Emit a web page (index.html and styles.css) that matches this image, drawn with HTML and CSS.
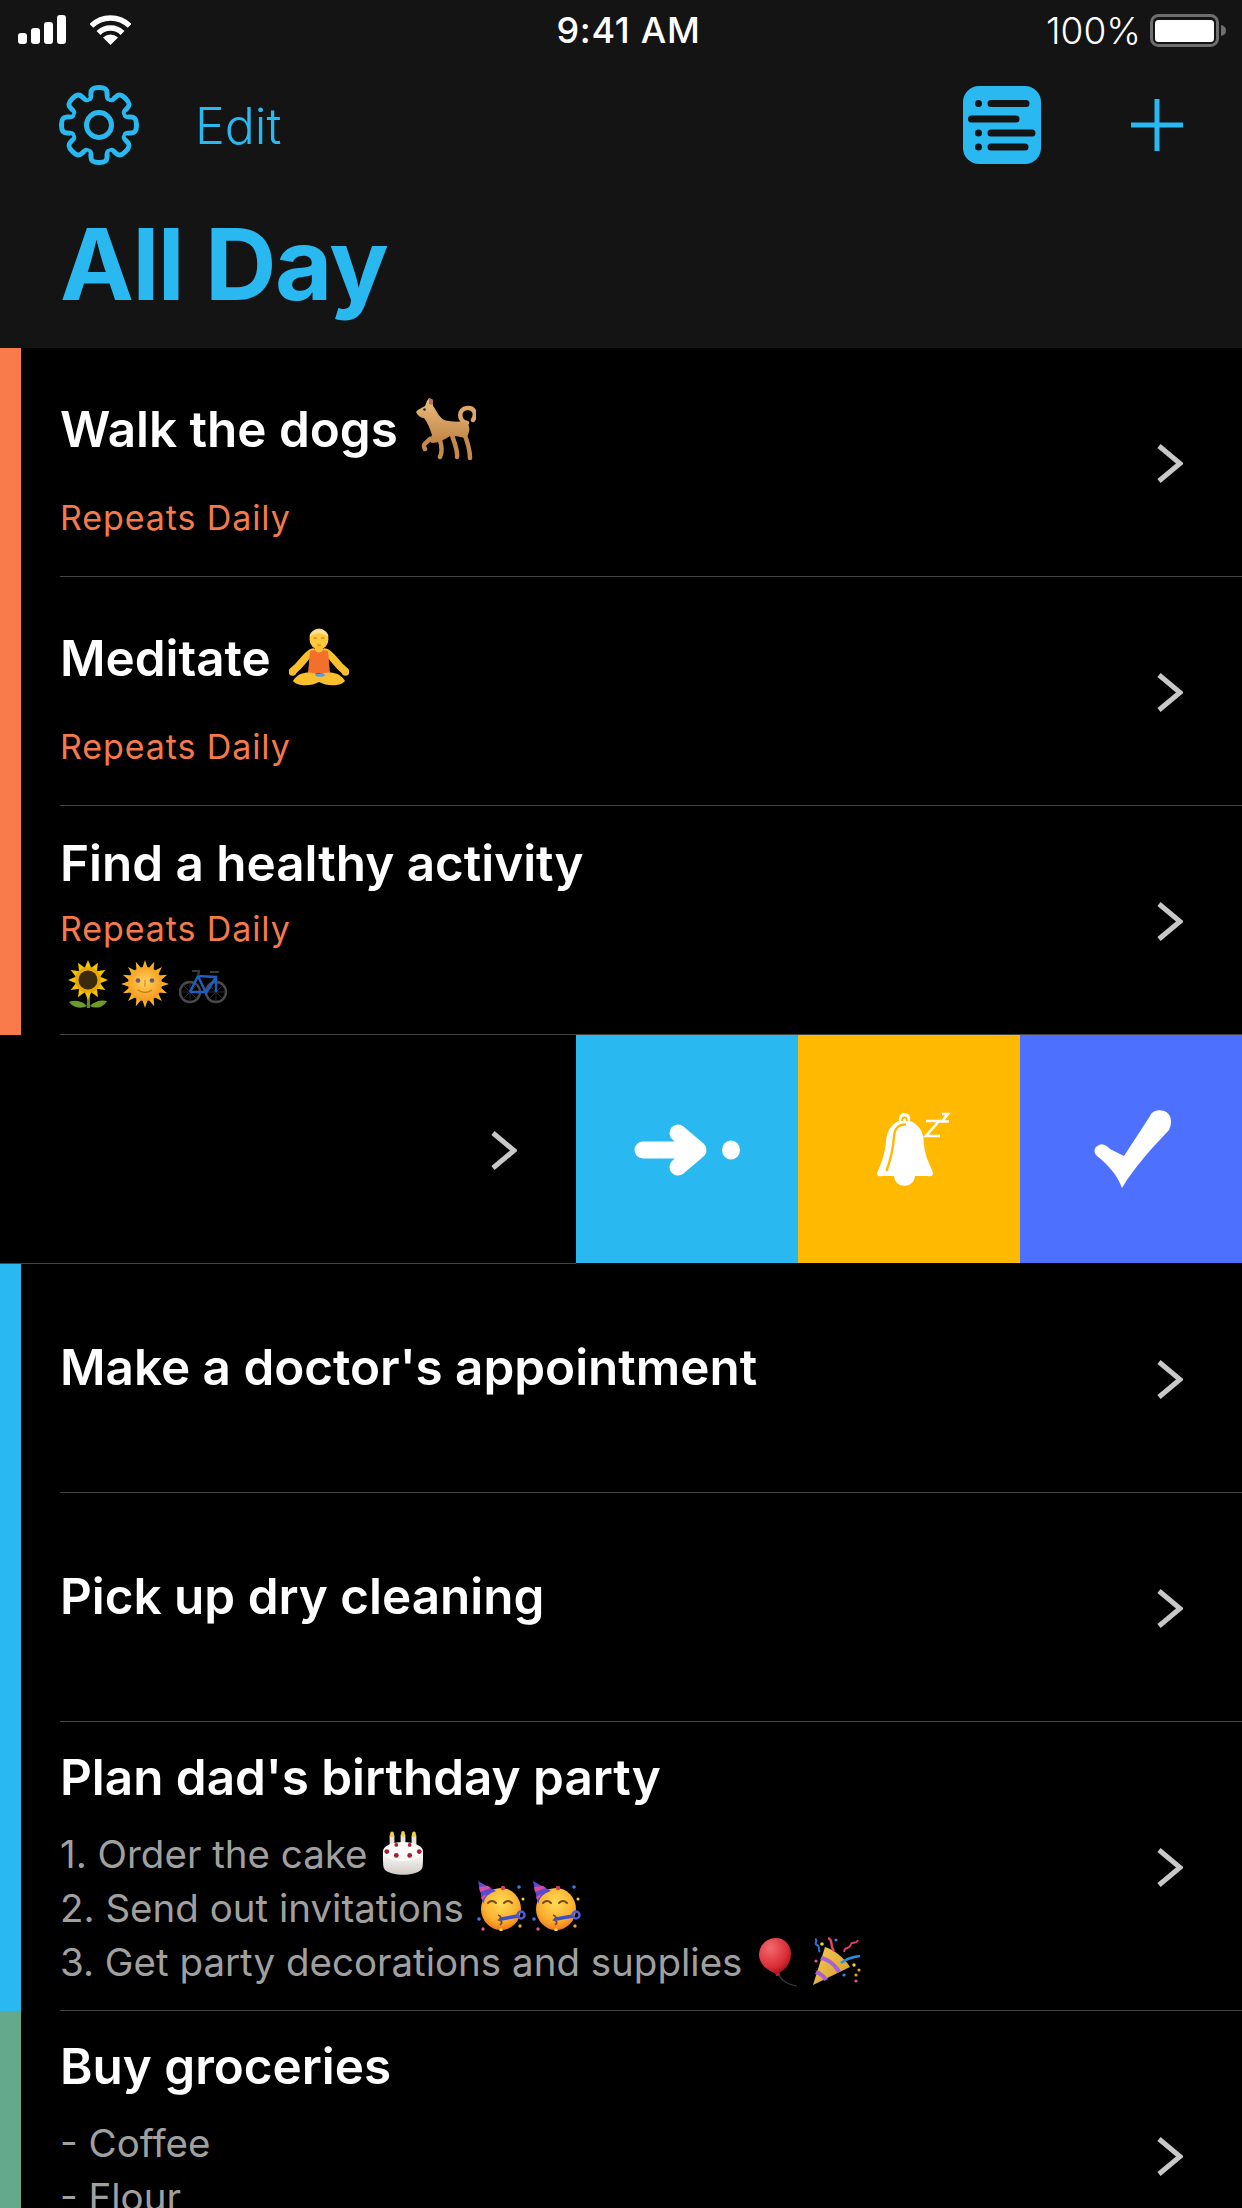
FILE: index.html
```html
<!DOCTYPE html>
<html lang="en">
<head>
<meta charset="utf-8">
<title>All Day</title>
<link rel="stylesheet" href="styles.css">
</head>
<body>
<svg class="defs" aria-hidden="true">
  <defs>
    <linearGradient id="gDog" x1="0" y1="0" x2="0" y2="1"><stop offset="0" stop-color="#EDBE80"/><stop offset="1" stop-color="#C08445"/></linearGradient>
    <radialGradient id="gSun" cx=".5" cy=".45" r=".55"><stop offset="0" stop-color="#FFD45A"/><stop offset="1" stop-color="#F59A1E"/></radialGradient>
    <radialGradient id="gFace" cx=".5" cy=".35" r=".65"><stop offset="0" stop-color="#FFDC55"/><stop offset=".7" stop-color="#FBAE2E"/><stop offset="1" stop-color="#EE7A1C"/></radialGradient>
    <radialGradient id="gBalloon" cx=".35" cy=".28" r=".75"><stop offset="0" stop-color="#F26A6E"/><stop offset=".7" stop-color="#DC2F37"/><stop offset="1" stop-color="#A8141F"/></radialGradient>
    <linearGradient id="gCone" x1="0" y1="0" x2="1" y2="1"><stop offset="0" stop-color="#F2CC55"/><stop offset="1" stop-color="#D99A2B"/></linearGradient>
    <linearGradient id="gCake" x1="0" y1="0" x2="0" y2="1"><stop offset="0" stop-color="#FFFFFF"/><stop offset="1" stop-color="#CFCBC6"/></linearGradient>
    <symbol id="partyFace" viewBox="0 0 50 50">
      <ellipse cx="25" cy="28" rx="20" ry="21" fill="url(#gFace)"/>
      <path d="M2 0 L20 10 Q9 13 7 23 Z" fill="#5B49D0"/>
      <path d="M3 6 L12 5 L15 7 L4 11 Z M5 16 L10 13 L9 16 L6 19 Z" fill="#D94C9E"/>
      <path d="M12 22 Q16 18 20 22 M28 22 Q32 18 36 22" fill="none" stroke="#7A4A1C" stroke-width="2" stroke-linecap="round"/>
      <path d="M22 34 Q27 36 23 39 Q28 41 24 44" fill="none" stroke="#7A4A1C" stroke-width="1.800"/>
      <path d="M25 38 L42 35" stroke="#3D4FC8" stroke-width="3.500" stroke-linecap="round"/>
      <circle cx="45" cy="34" r="3.500" fill="none" stroke="#4A5FD8" stroke-width="2.500"/>
      <circle cx="43" cy="6" r="1.800" fill="#3B7BE0"/><circle cx="27" cy="7" r="2.200" fill="#D63F5A"/>
      <circle cx="3" cy="38" r="1.800" fill="#3B7BE0"/><circle cx="7" cy="48" r="1.700" fill="#E0568A"/>
      <circle cx="25" cy="49" r="1.700" fill="#FFD42E"/><circle cx="44" cy="45" r="1.700" fill="#F0A030"/>
      <circle cx="47" cy="18" r="1.500" fill="#FFD42E"/>
    </symbol>
  </defs>
</svg>

<header class="top">
  <div class="status">
    <div class="status-left">
      <svg class="signal" viewBox="0 0 48 30"><rect x="0" y="18" width="9" height="11" rx="3" /><rect x="13" y="13" width="9" height="16" rx="3"/><rect x="26" y="7" width="9" height="22" rx="3"/><rect x="39" y="0" width="9" height="29" rx="3"/></svg>
      <svg class="wifi" viewBox="0 0 41 30"><path d="M1.400 10.900 A27 27 0 0 1 39.600 10.900 M8.500 18 A17 17 0 0 1 32.500 18" fill="none" stroke="#fff" stroke-width="5.500"/><path d="M20.500 30 L13 22.500 Q20.500 16.500 28 22.500 Z" fill="#fff"/></svg>
    </div>
    <div class="status-time">9:41 AM</div>
    <div class="status-right">
      <span class="pct">100%</span>
      <svg class="battery" viewBox="0 0 77 33"><rect x="1.500" y="1.500" width="66" height="30" rx="7" fill="none" stroke="#6E6E6E" stroke-width="3"/><rect x="5" y="6" width="59" height="22" rx="3.500" fill="#fff"/><path d="M71 11 Q76 12 76 16.500 Q76 21 71 22 Z" fill="#6E6E6E"/></svg>
    </div>
  </div>
  <nav class="nav">
    <svg class="gear" viewBox="-41 -41 82 82">
      <g fill="none" stroke="#29B9F0" stroke-width="5" stroke-linejoin="round">
        <g id="tooth"><path d="M-11 -26.500 C-8.500 -25.500 -8 -28 -8 -32 C-8 -36 -6 -37.500 0 -37.500 C6 -37.500 8 -36 8 -32 C8 -28 8.500 -25.500 11 -26.500"/></g>
        <use href="#tooth" transform="rotate(45)"/><use href="#tooth" transform="rotate(90)"/><use href="#tooth" transform="rotate(135)"/><use href="#tooth" transform="rotate(180)"/><use href="#tooth" transform="rotate(225)"/><use href="#tooth" transform="rotate(270)"/><use href="#tooth" transform="rotate(315)"/>
        <circle r="12.500"/>
      </g>
    </svg>
    <span class="edit">Edit</span>
    <div class="nav-right">
      <svg class="listicon" viewBox="0 0 78 78">
        <rect width="78" height="78" rx="16" fill="#29B9F0"/>
        <g fill="none" stroke="#141414" stroke-width="7" stroke-linecap="round">
          <path d="M15.500 17.500 V17.500 M28 17.500 H63 M8.500 33 H53 M15.500 47 V47 M28 47 H69 M15.500 61 V61 M28 61 H62"/>
        </g>
      </svg>
      <svg class="plus" viewBox="0 0 52 52"><path d="M26 0 V52 M0 26 H52" stroke="#29B9F0" stroke-width="5"/></svg>
    </div>
  </nav>
  <h1 class="title">All Day</h1>
</header>

<main>
  <section class="group group--orange">
    <div class="row">
      <div class="content content--spaced">
        <div class="name">Walk the dogs<svg class="emoji emoji--dog" viewBox="16 13 60 62">
          <path d="M67 38 C58 36 58 24 67 23 C74 22 77 29 73 35" fill="none" stroke="#DDA664" stroke-width="4.500" stroke-linecap="round"/>
          <path d="M30 54 C26 58 22 59 25 64 M52 50 C55 60 58 66 57 72 M64 48 C68 58 70 66 70 73 M40 55 C42 62 42 68 40 72" fill="none" stroke="#C58A4B" stroke-width="4.500" stroke-linecap="round" stroke-linejoin="round"/>
          <path d="M16 27 C18 24 22 23 25 21 L27 16 L29 13 L33 15 L33 21 C37 26 38 31 44 35 C52 37 58 37 63 36 C70 37 71 45 67 52 C62 54 56 50 50 51 C44 55 38 58 32 58 C28 56 31 52 32 50 C30 44 28 38 24 33 C21 33 18 31 16 27 Z" fill="url(#gDog)"/>
          <path d="M29 13 L33 15 L33 20 L29 19 Z" fill="#B9705E"/><circle cx="24.500" cy="24.500" r="1.300" fill="#3A2412"/>
        </svg></div>
        <div class="repeat repeat--far">Repeats Daily</div>
      </div>
      <svg class="chev" viewBox="0 0 27 41"><path d="M3 3 L24 20.500 L3 38" fill="none" stroke="#C8C8C8" stroke-width="5"/></svg>
    </div>
    <div class="row">
      <div class="content content--spaced">
        <div class="name">Meditate<svg class="emoji emoji--med" viewBox="9 9 60 58">
          <path d="M33 33 C26 35 24 43 13 52 M45 33 C52 35 54 43 65 52" fill="none" stroke="#FBBF2E" stroke-width="7.500" stroke-linecap="round"/>
          <circle cx="12.500" cy="53" r="3.800" fill="#FBBF2E"/><circle cx="65.500" cy="53" r="3.800" fill="#FBBF2E"/>
          <ellipse cx="39" cy="20" rx="9.500" ry="10.500" fill="#FFC83D"/>
          <path d="M29.500 18 C30 8 48 8 48.500 18 C43 13 35 13 29.500 18 Z" fill="#F4E1A0"/>
          <path d="M33.500 19 H37 M41 19 H44.500 M37 26 H41" stroke="#B9791B" stroke-width="1.200"/>
          <rect x="35" y="27" width="8" height="7" fill="#FBBF2E"/>
          <path d="M30 32 L34.500 31 Q39 36 43.500 31 L48 32 L50 54 H28 Z" fill="#F2702C"/>
          <path d="M13 62 C19 51 32 53 39 55 C46 53 59 51 65 62 C60 68 46 67 39 63 C32 67 18 68 13 62 Z" fill="#FBBF2E"/>
          <ellipse cx="40" cy="56" rx="5" ry="1.800" fill="#5AA0E0"/>
        </svg></div>
        <div class="repeat repeat--far">Repeats Daily</div>
      </div>
      <svg class="chev" viewBox="0 0 27 41"><path d="M3 3 L24 20.500 L3 38" fill="none" stroke="#C8C8C8" stroke-width="5"/></svg>
    </div>
    <div class="row">
      <div class="content content--tight">
        <div class="name">Find a healthy activity</div>
        <div class="repeat repeat--near">Repeats Daily</div>
        <div class="emoji-row">
          <svg class="sunflower" viewBox="0 0 40 48">
            <path d="M19 36 V48 H22 V36 Z" fill="#5E8A22"/>
            <path d="M19 46 C13 40 6 40 1 42 C5 48 13 49 19 46 Z M22 46 C28 40 35 40 39 41 C35 48 28 49 22 46 Z" fill="#6E9A2A"/>
            <g fill="#F5C400"><g id="petal"><path d="M20 0 L25 12 H15 Z"/></g>
              <use href="#petal" transform="rotate(30 20 20)"/><use href="#petal" transform="rotate(60 20 20)"/><use href="#petal" transform="rotate(90 20 20)"/><use href="#petal" transform="rotate(120 20 20)"/><use href="#petal" transform="rotate(150 20 20)"/><use href="#petal" transform="rotate(180 20 20)"/><use href="#petal" transform="rotate(210 20 20)"/><use href="#petal" transform="rotate(240 20 20)"/><use href="#petal" transform="rotate(270 20 20)"/><use href="#petal" transform="rotate(300 20 20)"/><use href="#petal" transform="rotate(330 20 20)"/>
            </g>
            <circle cx="20" cy="20" r="13" fill="#E8A800"/>
            <circle cx="20" cy="20" r="9.500" fill="#3A2A10"/>
          </svg>
          <svg class="sun" viewBox="0 0 48 48">
            <g fill="#F8B020"><g id="ray"><path d="M24 0 L27 9 H21 Z"/></g>
              <use href="#ray" transform="rotate(22.500 24 24)"/><use href="#ray" transform="rotate(45 24 24)"/><use href="#ray" transform="rotate(67.500 24 24)"/><use href="#ray" transform="rotate(90 24 24)"/><use href="#ray" transform="rotate(112.500 24 24)"/><use href="#ray" transform="rotate(135 24 24)"/><use href="#ray" transform="rotate(157.500 24 24)"/><use href="#ray" transform="rotate(180 24 24)"/><use href="#ray" transform="rotate(202.500 24 24)"/><use href="#ray" transform="rotate(225 24 24)"/><use href="#ray" transform="rotate(247.500 24 24)"/><use href="#ray" transform="rotate(270 24 24)"/><use href="#ray" transform="rotate(292.500 24 24)"/><use href="#ray" transform="rotate(315 24 24)"/><use href="#ray" transform="rotate(337.500 24 24)"/>
            </g>
            <circle cx="24" cy="24" r="17" fill="url(#gSun)"/>
            <circle cx="17" cy="20.500" r="2.300" fill="#6A5A7A"/><circle cx="31" cy="20.500" r="2.300" fill="#6A5A7A"/>
            <path d="M17 30 Q24 35 31 30" fill="none" stroke="#D07A18" stroke-width="1.300"/>
            <path d="M24 20 V27" stroke="#E59524" stroke-width="1.500"/>
          </svg>
          <svg class="bike" viewBox="0 0 48 36">
            <g fill="none" stroke="#4A4A4A" stroke-width="2.400"><circle cx="11" cy="24" r="10"/><circle cx="37" cy="24" r="10"/></g>
            <g fill="none" stroke="#333" stroke-width=".800"><path d="M1 24 H21 M11 14 V34 M4 17 L18 31 M18 17 L4 31 M27 24 H47 M37 14 V34 M30 17 L44 31 M44 17 L30 31"/></g>
            <path d="M11 24 L19 8 L37 9 L37 24 M19 8 L27 25 L37 9 M11 24 H27" fill="none" stroke="#1C5FC4" stroke-width="2.400"/>
            <path d="M13 3 H20 L19 8 M31 4 H40" fill="none" stroke="#3A3A3A" stroke-width="2.200"/>
          </svg>
        </div>
      </div>
      <svg class="chev" viewBox="0 0 27 41"><path d="M3 3 L24 20.500 L3 38" fill="none" stroke="#C8C8C8" stroke-width="5"/></svg>
    </div>
  </section>

  <section class="swiped">
    <div class="swiped-main">
      <svg class="chev" viewBox="0 0 27 41"><path d="M3 3 L24 20.500 L3 38" fill="none" stroke="#C8C8C8" stroke-width="5"/></svg>
    </div>
    <div class="actions">
      <div class="action action--blue">
        <svg class="ic-arrow" viewBox="0 0 106 60"><path d="M9 31 H60 M44 14 L64 31 L44 48" fill="none" stroke="#fff" stroke-width="17" stroke-linecap="round" stroke-linejoin="round"/><ellipse cx="97" cy="31" rx="9" ry="9.500" fill="#fff"/></svg>
      </div>
      <div class="action action--yellow">
        <svg class="ic-bell" viewBox="0 0 80 80">
          <path d="M31.500 4 C27 4 25.500 8 26 12 C18 15 14 22 13 32 C12 46 8 54 5 62 C3 66 5 68 9 67 H21 C22 80 41 80 42 67 H55 C60 68 61 65 59 61 C55 52 51 44 50.500 30 C50 22 45 15 37 12 C38 8 36 4 31.500 4 Z" fill="#fff"/>
          <path d="M29 12 C29 7 34 7 34 12" fill="none" stroke="#FFB900" stroke-width="1.800"/>
          <path d="M33 15.500 C26 15 21.500 19 21 28 C20 42 17 52 13.500 62" fill="none" stroke="#FFB900" stroke-width="2.400"/>
          <path d="M53 12 H66 L53 27 H67" fill="none" stroke="#fff" stroke-width="2.600"/>
          <path d="M69 5 H75 L69 12.500 H76" fill="none" stroke="#fff" stroke-width="2.600"/>
        </svg>
      </div>
      <div class="action action--indigo">
        <svg class="ic-check" viewBox="0 0 86 86"><path d="M32 82 C27 68 16 57 7 50 C3 46 4 41 9 39 C13 37 17 40 20 43 L34 50 L60 10 C62 5 68 3 74 5 C81 7 83 16 79 24 C64 40 45 60 32 82 Z" fill="#fff"/></svg>
      </div>
    </div>
  </section>

  <section class="group group--blue">
    <div class="row">
      <div class="content content--solo"><div class="name">Make a doctor's appointment</div></div>
      <svg class="chev" viewBox="0 0 27 41"><path d="M3 3 L24 20.500 L3 38" fill="none" stroke="#C8C8C8" stroke-width="5"/></svg>
    </div>
    <div class="row">
      <div class="content content--solo"><div class="name">Pick up dry cleaning</div></div>
      <svg class="chev" viewBox="0 0 27 41"><path d="M3 3 L24 20.500 L3 38" fill="none" stroke="#C8C8C8" stroke-width="5"/></svg>
    </div>
    <div class="row row--notes">
      <div class="content content--notes">
        <div class="name">Plan dad's birthday party</div>
        <div class="notes">
          <div class="note">1. Order the cake<svg class="emoji emoji--cake" viewBox="0 0 44 46">
            <path d="M8 4 h5 v20 h-5 Z M19.500 3 h5 v22 h-5 Z M31 4 h5 v20 h-5 Z" fill="#E8E4DA"/>
            <ellipse cx="10.500" cy="3" rx="2" ry="3" fill="#F4D040"/><ellipse cx="22" cy="2.500" rx="2" ry="3" fill="#F4D040"/><ellipse cx="33.500" cy="3" rx="2" ry="3" fill="#F4D040"/>
            <path d="M1 21 C1 34 1 38 3 40 C10 47 34 47 41 40 C43 38 43 34 43 21 Z" fill="url(#gCake)"/>
            <ellipse cx="22" cy="21" rx="21" ry="10" fill="#FBFAF8"/>
            <g fill="#A81C34"><circle cx="5" cy="21" r="2.500"/><circle cx="15" cy="25" r="2.500"/><circle cx="29" cy="25" r="2.500"/><circle cx="39" cy="21" r="2.500"/><circle cx="15" cy="14" r="2"/><circle cx="29" cy="14" r="2"/></g>
          </svg></div>
          <div class="note">2. Send out invitations<svg class="emoji emoji--party"><use href="#partyFace"/></svg><svg class="emoji emoji--party emoji--next"><use href="#partyFace"/></svg></div>
          <div class="note">3. Get party decorations and supplies<svg class="emoji emoji--balloon" viewBox="0 0 38 49">
            <path d="M20 36 C22 43 30 47 38 48" fill="none" stroke="#3A3A3A" stroke-width="1.200"/>
            <path d="M17 0 C7 0 0 8 0 17 C0 27 11 34 18 36 C26 32 32 26 32 16 C32 7 26 0 17 0 Z" fill="url(#gBalloon)"/>
            <path d="M16 35 H21 L20 38 H17 Z" fill="#B81C28"/>
          </svg><svg class="emoji emoji--popper" viewBox="0 0 50 50">
            <path d="M1 48 L13 10 C20 12 32 20 38 30 Z" fill="url(#gCone)"/>
            <path d="M10 19 C18 21 25 27 29 34 L25 36 C22 29 15 24 8 23 Z M5 33 C10 35 14 39 16 42 L12 44 C10 40 7 38 3 37 Z" fill="#A860D8"/>
            <path d="M3 2 C7 3 1 6 5 8 C9 10 5 12 8 15" fill="none" stroke="#2A6FD8" stroke-width="2"/>
            <path d="M16 1 C22 3 17 8 22 14" fill="none" stroke="#E04468" stroke-width="2.400"/>
            <path d="M32 15 C33 8 37 14 39 7 C40 4 44 8 46 3" fill="none" stroke="#E04468" stroke-width="1.800"/>
            <path d="M29 26 C34 22 40 20 48 19" fill="none" stroke="#2A8FE0" stroke-width="2.600"/>
            <circle cx="10" cy="7" r="1.800" fill="#F4D030"/><circle cx="24" cy="3" r="1.600" fill="#3A80E0"/><circle cx="4" cy="24" r="1.600" fill="#E0568A"/><circle cx="42" cy="28" r="1.700" fill="#F4D030"/><circle cx="47" cy="33" r="1.600" fill="#F0A030"/><circle cx="32" cy="38" r="1.600" fill="#2A8FE0"/><circle cx="44" cy="38" r="1.600" fill="#F0A030"/><circle cx="44" cy="44" r="1.600" fill="#E0568A"/>
          </svg></div>
        </div>
      </div>
      <svg class="chev" viewBox="0 0 27 41"><path d="M3 3 L24 20.500 L3 38" fill="none" stroke="#C8C8C8" stroke-width="5"/></svg>
    </div>
  </section>

  <section class="group group--green">
    <div class="row row--notes">
      <div class="content content--notes">
        <div class="name">Buy groceries</div>
        <div class="notes">
          <div class="note">- Coffee</div>
          <div class="note">- Flour</div>
        </div>
      </div>
      <svg class="chev" viewBox="0 0 27 41"><path d="M3 3 L24 20.500 L3 38" fill="none" stroke="#C8C8C8" stroke-width="5"/></svg>
    </div>
  </section>
</main>
</body>
</html>
```

FILE: styles.css
```css
* { box-sizing: border-box; margin: 0; padding: 0; }
html, body { width: 1242px; height: 2208px; overflow: hidden; background: #000; }
body { font-family: Inter, "Liberation Sans", sans-serif; color: #fff; }
svg { display: block; flex: none; }
.defs { position: absolute; width: 0; height: 0; }

.top { height: 348px; background: #141414; }
.status { display: grid; grid-template-columns: 1fr auto 1fr; align-items: center; height: 60px; padding: 0 15px 0 18px; }
.status-left { display: flex; align-items: center; gap: 24px; }
.signal { width: 48px; height: 30px; fill: #fff; }
.wifi { width: 41px; height: 30px; }
.status-time { padding-left: 12px; font-size: 36px; font-weight: 500; letter-spacing: .7px; }
.status-right { display: flex; align-items: center; justify-content: flex-end; gap: 9px; }
.pct { font-size: 37px; font-weight: 300; }
.battery { width: 77px; height: 33px; }

.nav { display: flex; align-items: center; height: 82px; margin-top: 24px; padding: 0 59px 0 58px; }
.gear { width: 82px; height: 82px; }
.edit { margin: 2px 0 0 55px; font-size: 50px; font-weight: 300; color: #29B9F0; }
.nav-right { display: flex; align-items: center; gap: 90px; margin-left: auto; }
.listicon { width: 78px; height: 78px; }
.plus { width: 52px; height: 52px; }
.title { margin: 43px 0 0 60px; font-size: 99px; line-height: 110px; font-weight: 700; color: #29B9F0; letter-spacing: -1.500px; }

.group { border-left: 21px solid; }
.group--orange { border-color: #F97B4B; }
.group--blue { border-color: #29B9F0; }
.group--green { border-color: #65A98C; }

.row { display: flex; height: 229px; margin-left: 39px; padding-right: 59px; border-bottom: 1px solid #444; }
.row--notes { height: 289px; }
.content { flex: 1; min-width: 0; }
.content--spaced { padding-top: 52px; }
.content--tight { padding-top: 28px; }
.content--solo { padding-top: 74px; }
.content--notes { padding-top: 26px; }
.chev { width: 27px; height: 41px; align-self: center; margin-top: 2px; }

.name { display: flex; align-items: center; height: 58px; font-size: 49.400px; font-weight: 600; white-space: nowrap; }
.repeat { height: 50px; line-height: 50px; font-size: 34px; letter-spacing: .9px; color: #F57A4B; }
.repeat--far { margin-top: 35px; }
.repeat--near { margin-top: 12px; }
.emoji-row { display: flex; align-items: flex-end; margin: 6px 0 0 8px; }
.sunflower { width: 40px; height: 48px; }
.sun { width: 48px; height: 48px; margin-left: 13px; }
.bike { width: 48px; height: 36px; margin-left: 10px; margin-bottom: 4px; }

.emoji--dog { width: 60px; height: 62px; margin-left: 18px; }
.emoji--med { width: 60px; height: 58px; margin: -2px 0 0 18px; }

.notes { margin-top: 21px; }
.note { display: flex; align-items: center; height: 54px; font-size: 38.500px; font-weight: 400; color: #A0A0A0; white-space: nowrap; }
.emoji--cake { width: 42px; height: 45px; margin: -2px 0 0 14px; }
.emoji--party { width: 50px; height: 50px; margin: -4px 0 0 12px; }
.emoji--next { margin-left: 5px; }
.emoji--balloon { width: 38px; height: 49px; margin-left: 17px; }
.emoji--popper { width: 50px; height: 50px; margin-left: 15px; }

.swiped { display: flex; height: 229px; }
.swiped-main { display: flex; align-items: center; justify-content: flex-end; width: 576px; padding-right: 59px; border-bottom: 1px solid #444; }
.actions { display: flex; flex: 1; height: 228px; }
.action { display: flex; flex: 1; align-items: center; justify-content: center; }
.action--blue { background: #29B9F0; }
.action--yellow { background: #FFB900; }
.action--indigo { background: #4D70FF; }
.ic-arrow { width: 106px; height: 60px; }
.ic-bell { width: 80px; height: 80px; margin-left: 8px; }
.ic-check { width: 86px; height: 86px; margin-left: 3px; }
```
